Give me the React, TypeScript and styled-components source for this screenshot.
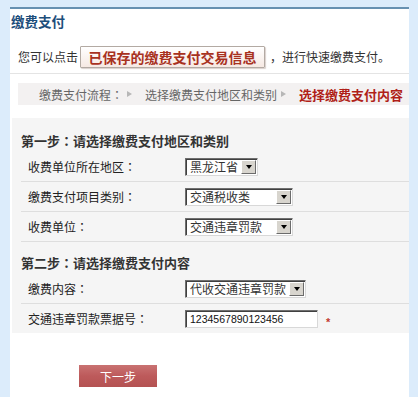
import React from 'react';
import styled, { createGlobalStyle } from 'styled-components';

const GlobalStyle = createGlobalStyle`
  html, body {
    margin: 0;
    padding: 0;
    background: #dcecfb;
  }
  body {
    font-family: "Noto Sans CJK SC", "Liberation Sans", sans-serif;
    font-size: 12px;
    color: #333333;
  }
`;

// centred full-width colons, as in the original page font
const colonFont = `"Noto Sans CJK TC", "Noto Sans CJK SC", sans-serif`;

const Panel = styled.div`
  margin: 7px 0 0 10px;
  width: 399px;
  min-height: 390px;
  background: #ffffff;
  border-top: 2px solid #6791b1;
`;

const Title = styled.div`
  padding: 4px 0 0 1px;
  font-size: 13.5px;
  font-weight: bold;
  line-height: 16px;
  color: #1d4e7b;
`;

const Intro = styled.div`
  display: flex;
  align-items: center;
  margin-top: 17px;
  padding: 0 0 5px 8px;
  height: 22px;
  line-height: 16px;
  border-bottom: 1px solid #e4e4e4;
`;

const SavedButton = styled.button`
  height: 22px;
  width: 185px;
  margin: 0 5px 0 2px;
  padding: 0;
  border: 1px solid #b3aaa3;
  border-radius: 1px;
  background: linear-gradient(#ffffff, #f6e9e3);
  box-shadow: 1px 1px 1px rgba(150, 120, 110, 0.35);
  font-family: inherit;
  font-size: 14px;
  font-weight: bold;
  color: #a8321f;
  line-height: 18px;
`;

const Crumbs = styled.div`
  display: flex;
  align-items: center;
  margin: 9px 0 0 8px;
  height: 22px;
  padding-left: 21px;
  background: #f3f1f1;
  color: #666666;
  font-family: ${colonFont};
`;

const Arrow = styled.span`
  width: 0;
  height: 0;
  margin: 0 13px 0 4px;
  border-top: 3px solid transparent;
  border-bottom: 3px solid transparent;
  border-left: 5px solid #b7b7b7;
`;

const Current = styled.span`
  font-size: 13px;
  font-weight: bold;
  color: #b01f18;
`;

const FormSection = styled.div`
  margin: 13px 0 0 2px;
  padding-left: 9px;
  background: #f5f5f5;
`;

const StepHeading = styled.div<{ $top: number }>`
  padding: ${(p) => p.$top}px 0 3px 0;
  font-family: ${colonFont};
  font-size: 13px;
  font-weight: bold;
  line-height: 16px;
  color: #333333;
`;

const Row = styled.div<{ $last?: boolean }>`
  display: flex;
  align-items: center;
  height: 29px;
  border-bottom: ${(p) => (p.$last ? 'none' : '1px solid #dedede')};
`;

const Label = styled.div`
  width: 157px;
  padding-left: 7px;
  font-family: ${colonFont};
  color: #222222;
`;

const Select = styled.div<{ $width: number }>`
  display: flex;
  align-items: center;
  justify-content: space-between;
  box-sizing: border-box;
  width: ${(p) => p.$width}px;
  height: 18px;
  padding: 0 1px 0 4px;
  background: #ffffff;
  border-top: 1px solid #6f6f6f;
  border-left: 1px solid #6f6f6f;
  border-right: 1px solid #d8d8d8;
  border-bottom: 1px solid #d8d8d8;
  box-shadow: inset 1px 1px 0 #404040;
  color: #333333;
  line-height: 16px;
`;

const DropButton = styled.span`
  display: flex;
  align-items: center;
  justify-content: center;
  box-sizing: border-box;
  width: 15px;
  height: 14px;
  background: #d8d5ce;
  border-top: 1px solid #ffffff;
  border-left: 1px solid #ffffff;
  border-right: 1px solid #6b6b6b;
  border-bottom: 1px solid #6b6b6b;

  &::after {
    content: '';
    width: 0;
    height: 0;
    border-left: 3px solid transparent;
    border-right: 3px solid transparent;
    border-top: 4px solid #000000;
  }
`;

const TextInput = styled.input`
  box-sizing: border-box;
  width: 133px;
  height: 18px;
  padding: 0 0 0 4px;
  border-top: 1px solid #6f6f6f;
  border-left: 1px solid #6f6f6f;
  border-right: 1px solid #d8d8d8;
  border-bottom: 1px solid #d8d8d8;
  box-shadow: inset 1px 1px 0 #404040;
  font-family: "Liberation Sans", sans-serif;
  font-size: 10.5px;
  color: #111111;
  outline: none;
`;

const Required = styled.span`
  margin: 6px 0 0 8px;
  font-family: "Liberation Sans", sans-serif;
  font-size: 11px;
  font-weight: bold;
  color: #c23a2e;
`;

const Footer = styled.div`
  padding: 32px 0 20px 69px;
`;

const NextButton = styled.button`
  width: 78px;
  height: 22px;
  padding: 0;
  border: none;
  background: linear-gradient(#c97272, #bd5a5b 50%, #b45252);
  font-family: inherit;
  font-size: 12px;
  color: #ffffff;
`;

const DropSelect = ({ width, value }: { width: number; value: string }) => (
  <Select $width={width}>
    <span>{value}</span>
    <DropButton />
  </Select>
);

const App = () => {
  return (
    <>
      <GlobalStyle />
      <Panel>
        <Title>缴费支付</Title>
        <Intro>
          您可以点击
          <SavedButton>已保存的缴费支付交易信息</SavedButton>
          ，进行快速缴费支付。
        </Intro>
        <Crumbs>
          缴费支付流程：
          <Arrow />
          选择缴费支付地区和类别
          <Arrow />
          <Current>选择缴费支付内容</Current>
        </Crumbs>
        <FormSection>
          <StepHeading $top={15}>第一步：请选择缴费支付地区和类别</StepHeading>
          <Row>
            <Label>收费单位所在地区：</Label>
            <DropSelect width={73} value="黑龙江省" />
          </Row>
          <Row>
            <Label>缴费支付项目类别：</Label>
            <DropSelect width={108} value="交通税收类" />
          </Row>
          <Row>
            <Label>收费单位：</Label>
            <DropSelect width={108} value="交通违章罚款" />
          </Row>
          <StepHeading $top={13}>第二步：请选择缴费支付内容</StepHeading>
          <Row>
            <Label>缴费内容：</Label>
            <DropSelect width={121} value="代收交通违章罚款" />
          </Row>
          <Row $last>
            <Label>交通违章罚款票据号：</Label>
            <TextInput defaultValue="1234567890123456" />
            <Required>*</Required>
          </Row>
        </FormSection>
        <Footer>
          <NextButton>下一步</NextButton>
        </Footer>
      </Panel>
    </>
  );
};

export default App;
